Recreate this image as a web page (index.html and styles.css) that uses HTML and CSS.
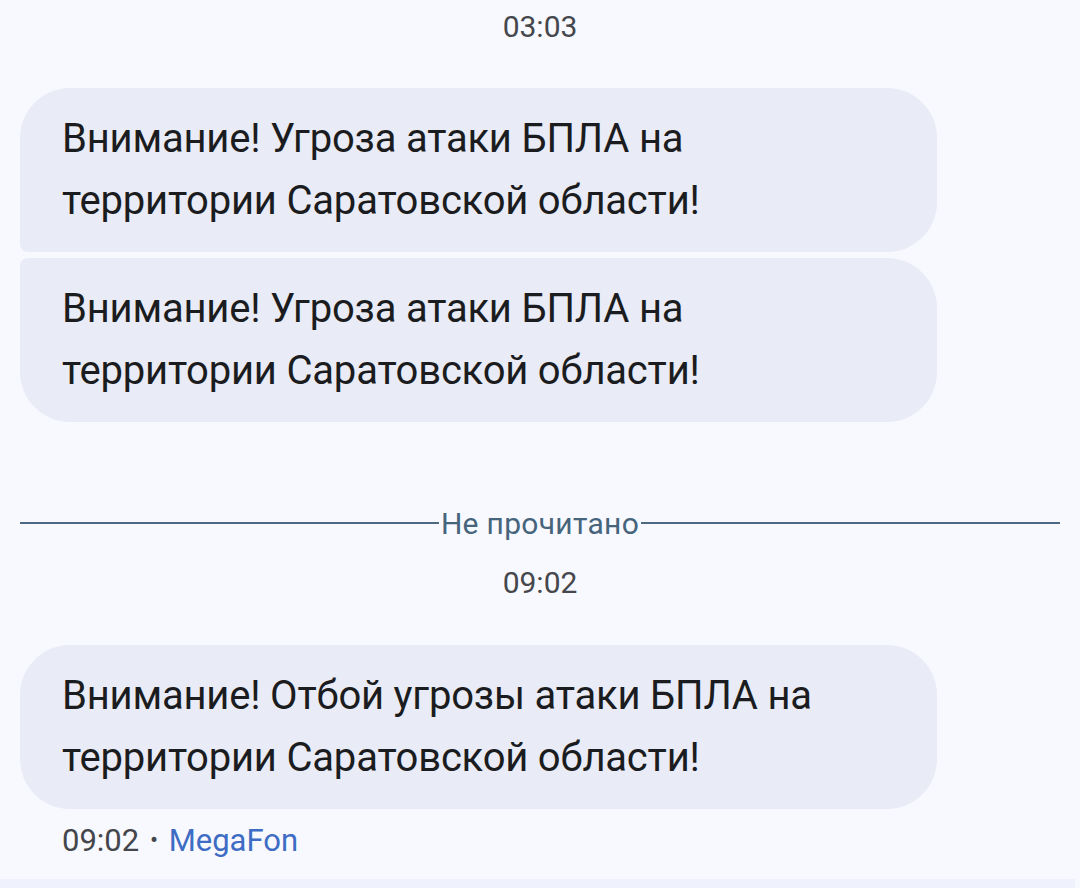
FILE: index.html
```html
<html>
<head>
    <meta charset="utf-8">
    <link rel="stylesheet" href="styles.css">
</head>

<body>
    <div class="thread">
        <div class="stamp">03:03</div>

        <div class="group">
            <div class="bubble first">Внимание! Угроза атаки БПЛА на<br>территории Саратовской области!</div>
            <div class="bubble last">Внимание! Угроза атаки БПЛА на<br>территории Саратовской области!</div>
        </div>

        <div class="unread">
            <span class="unreadLine"></span>
            <span class="unreadLabel">Не прочитано</span>
            <span class="unreadLine"></span>
        </div>

        <div class="stamp stampSecond">09:02</div>

        <div class="group">
            <div class="bubble">Внимание! Отбой угрозы атаки БПЛА на<br>территории Саратовской области!</div>
        </div>

        <div class="meta">09:02 <span class="dot">•</span> <span class="sender">MegaFon</span></div>
    </div>

    <div class="composer"></div>
</body>

</html>
```

FILE: styles.css
```css
html, body {
    margin: 0px;
    height: 888px;
    overflow: hidden;
}
body {
    background-color: #f7f9fe;
    color: #1b1c20;
    font-family: Roboto, "Noto Sans", sans-serif;
    display: flex;
    flex-direction: column;
}
.thread {
    flex: 1;
    padding: 0px 20px;
}
.stamp {
    text-align: center;
    font-size: 30px;
    line-height: 54px;
    color: #45474c;
    margin-bottom: 34px;
}
.stampSecond {
    margin-top: 18px;
    margin-bottom: 35px;
}
.group {
    display: flex;
    flex-direction: column;
    gap: 6px;
}
.bubble {
    width: 917px;
    box-sizing: border-box;
    background-color: #e9ebf6;
    border-radius: 50px;
    padding: 20px 42px;
    font-size: 40px;
    line-height: 62px;
    letter-spacing: -0.2px;
}
.bubble.first {
    border-bottom-left-radius: 8px;
}
.bubble.last {
    border-top-left-radius: 8px;
}
.unread {
    display: flex;
    align-items: center;
    height: 30px;
    margin-top: 86px;
    color: #46647c;
}
.unreadLine {
    flex: 1;
    height: 2px;
    background-color: #4d6a82;
}
.unreadLabel {
    font-size: 30px;
    letter-spacing: 0.3px;
    padding: 0px 2px;
}
.meta {
    margin-top: 11px;
    padding-left: 42px;
    font-size: 31px;
    line-height: 40px;
    color: #44464b;
}
.dot {
    font-size: 24px;
    padding: 0px 3px;
    vertical-align: 3px;
}
.sender {
    color: #3e6cc4;
}
.composer {
    height: 9px;
    margin-right: 5px;
    background-color: #eff1fc;
}
```
